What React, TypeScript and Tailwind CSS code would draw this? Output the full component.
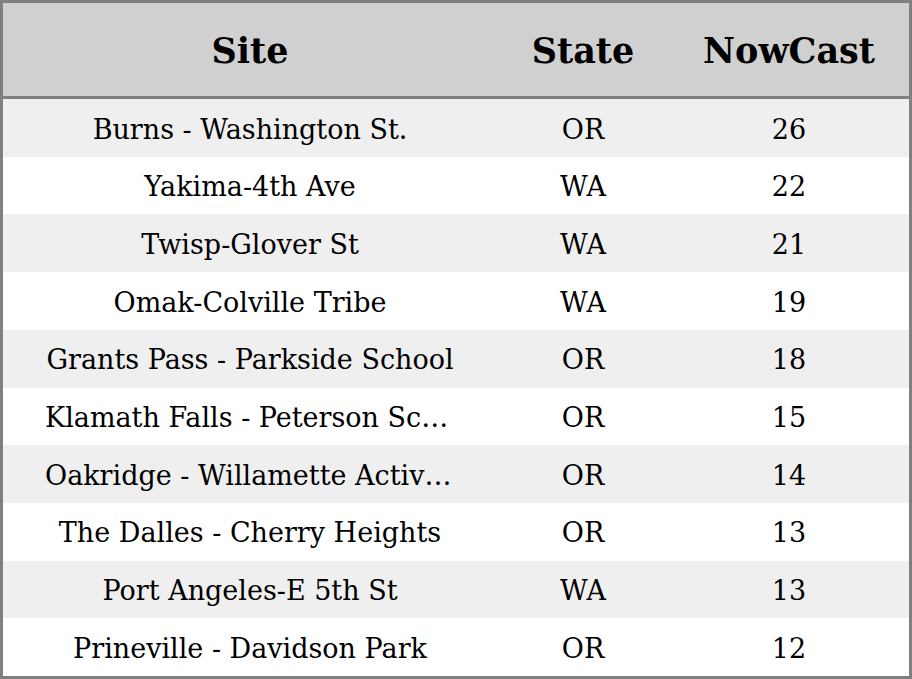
const rows = [
  { site: 'Burns - Washington St.', state: 'OR', nowcast: 26 },
  { site: 'Yakima-4th Ave', state: 'WA', nowcast: 22 },
  { site: 'Twisp-Glover St', state: 'WA', nowcast: 21 },
  { site: 'Omak-Colville Tribe', state: 'WA', nowcast: 19 },
  { site: 'Grants Pass - Parkside School', state: 'OR', nowcast: 18 },
  { site: 'Klamath Falls - Peterson School', state: 'OR', nowcast: 15 },
  { site: 'Oakridge - Willamette Activity Center', state: 'OR', nowcast: 14 },
  { site: 'The Dalles - Cherry Heights', state: 'OR', nowcast: 13 },
  { site: 'Port Angeles-E 5th St', state: 'WA', nowcast: 13 },
  { site: 'Prineville - Davidson Park', state: 'OR', nowcast: 12 }
]

export default function App() {
  return (
    <div className="w-[912px] h-[679px] border-[3px] border-[#808080] bg-white flex flex-col text-black font-['DejaVu_Serif',serif]">
      {/* HEADER */}
      <div className="h-[96px] shrink-0 grid grid-cols-[494px_172px_1fr] items-center pt-1 bg-[#d0d0d0] border-b-[3px] border-[#808080] text-[35px] font-bold">
        <div className="text-center">Site</div>
        <div className="text-center">State</div>
        <div className="text-center">NowCast</div>
      </div>
      {/* ROWS */}
      <div className="flex-1 grid grid-rows-10">
        {rows.map((r, i) => (
          <div
            key={i}
            className={`grid grid-cols-[494px_172px_1fr] items-center pt-1 text-[27px] ${i % 2 === 0 ? 'bg-[#efefef]' : 'bg-white'}`}
          >
            <div className="px-[42px] truncate text-center">{r.site}</div>
            <div className="text-center">{r.state}</div>
            <div className="text-center">{r.nowcast}</div>
          </div>
        ))}
      </div>
    </div>
  )
}
